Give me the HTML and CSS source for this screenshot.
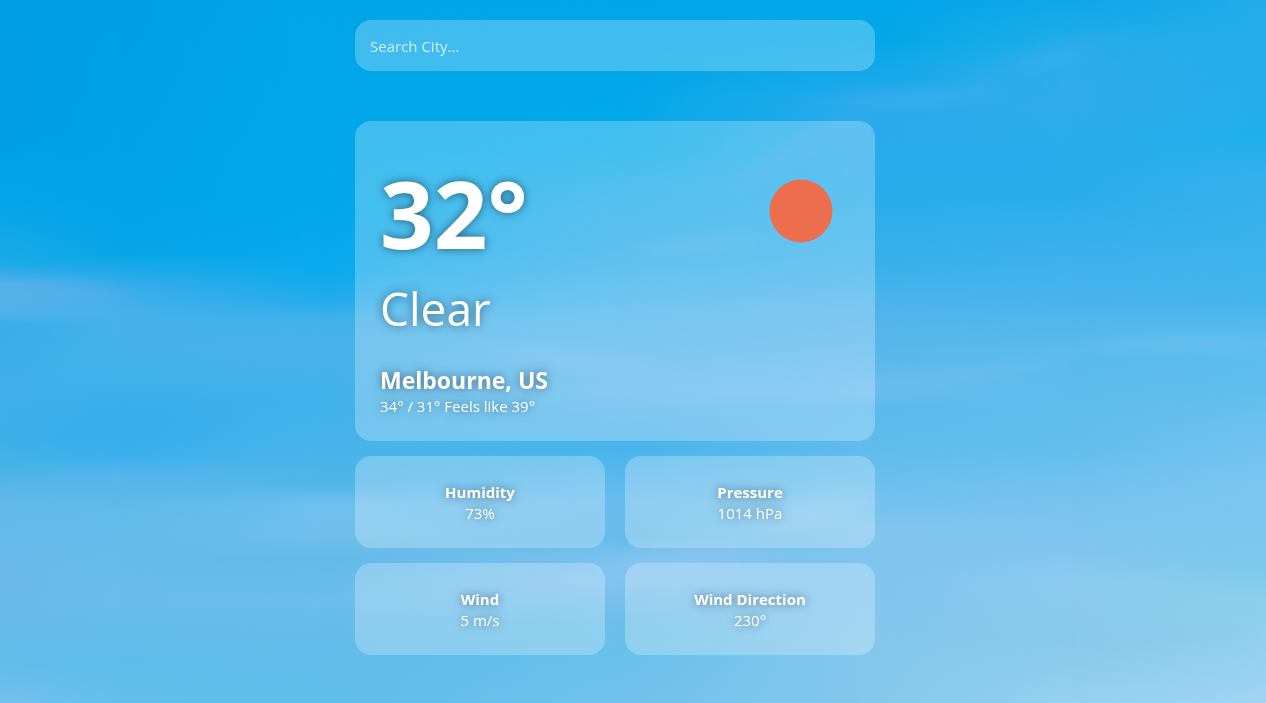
FILE: index.html
```html
<!DOCTYPE html>
<html lang="en">
<head>
<meta charset="utf-8">
<meta name="viewport" content="width=device-width, initial-scale=1">
<title>Weather</title>
<link rel="stylesheet" href="styles.css">
</head>
<body>
<svg class="sky" viewBox="0 0 1266 703" preserveAspectRatio="none" aria-hidden="true"></svg>
<main class="weather">
  <input class="card search" type="search" placeholder="Search City..." aria-label="Search City">
  <section class="card current">
    <div class="summary">
      <h1 class="temperature">32°</h1>
      <p class="condition">Clear</p>
      <h2 class="city">Melbourne, US</h2>
      <p class="range">34° / 31° Feels like 39°</p>
    </div>
    <svg class="sun" viewBox="0 0 64 64" role="img" aria-label="Clear sky"><circle cx="32" cy="32" r="31.5" fill="#ec6e4c"/></svg>
  </section>
  <section class="details">
    <article class="card detail"><h3>Humidity</h3><p>73%</p></article>
    <article class="card detail"><h3>Pressure</h3><p>1014 hPa</p></article>
    <article class="card detail"><h3>Wind</h3><p>5 m/s</p></article>
    <article class="card detail"><h3>Wind Direction</h3><p>230°</p></article>
  </section>
</main>
<script src="sky.js"></script>
</body>
</html>
```
FILE: styles.css
```css
* {
  box-sizing: border-box;
  margin: 0;
}

body {
  min-height: 100vh;
  padding: 20px 36px 20px 0;
  background: #3fb0ea;
  color: #fff;
  font: 15px/21px "Segoe UI", "Open Sans", "Noto Sans", sans-serif;
}

.sky {
  position: fixed;
  inset: 0;
  width: 100%;
  height: 100%;
  z-index: -1;
}

.weather {
  display: flex;
  flex-direction: column;
  width: 100%;
  max-width: 520px;
  margin: 0 auto;
}

.card {
  border: 0;
  border-radius: 16px;
  background: rgba(255, 255, 255, 0.25);
}

.search {
  width: 100%;
  height: 51px;
  margin-bottom: 50px;
  padding: 0 15px;
  color: #fff;
  font: inherit;
  outline: none;
  appearance: none;
}

.search::placeholder {
  color: rgba(255, 255, 255, 0.75);
  opacity: 1;
}

.current {
  display: flex;
  justify-content: space-between;
  align-items: flex-start;
  margin-bottom: 15px;
  padding: 29px 25px 24px;
  text-shadow: 0 0 10px rgba(0, 0, 0, 0.5);
}

.temperature {
  font-size: 94px;
  line-height: 126px;
  text-shadow: 0 0 10px rgba(0, 0, 0, 0.5);
}

.condition {
  margin-bottom: 26px;
  font-size: 46px;
  line-height: 64px;
  text-shadow: 0 0 10px rgba(0, 0, 0, 0.5);
}

.city {
  margin-bottom: 2px;
  font-size: 23px;
  line-height: 28px;
}

.sun {
  width: 64px;
  height: 64px;
  margin: 29px 17px 0 0;
}

.details {
  display: grid;
  grid-template-columns: 1fr 1fr;
  gap: 15px 20px;
}

.detail {
  padding: 26px 15px 24px;
  text-align: center;
  text-shadow: 0 0 10px rgba(0, 0, 0, 0.5);
}

.detail h3 {
  font-size: 15px;
}
```
FILE: sky.js
```js
// Paints the sky: vertical colour ramps at several x positions, cross-faded, with soft cloud streaks on top.
const columns = [
  [0, "0 00a0e6,130 009fe4,200 04a6ea,265 1eaae8,283 50b0ea,310 55b2ea,325 3aaee8,390 42b0ea,440 3fb0e8,465 45b3e6,500 62b8ea,560 6abaec,620 68baea,660 60bcea,703 76c0ee"],
  [120, "0 00a0e6,200 00a3e8,255 08a6e9,290 3cadea,310 45b1ea,370 43b2ea,415 38aeed,455 3cb0ee,475 55b5ea,520 63bbea,600 6bbdec,660 5fbcea,703 64bfec"],
  [320, "0 00a5e8,200 00a8ea,270 0aaaee,300 22abec,320 42b1ea,350 47b2ea,400 40b1ea,450 47b4ea,485 50b6e8,505 6cbfee,535 6fbfec,560 62bae8,600 6cbeec,650 62bbea,703 60bdea"],
  [615, "0 00a5e8,110 00a9ea,150 02abeb,185 16abeb,250 25abeb,310 45b3eb,390 5db8ed,425 50b5ec,450 48b4ec,500 6abcee,540 68bcea,555 78c0ee,580 84c4f0,620 6cbeea,650 68c0ea,703 70c2ec"],
  [870, "0 00a8ea,40 00a8e8,80 18a8ec,100 2aaaec,200 2aaeec,260 38b0ea,310 50b4ec,350 58b8ec,390 6abcf0,410 5abaee,450 60bcec,500 70c2ee,530 80c6ee,560 7ec4ee,640 84c8ee,703 84c8ec"],
  [1070, "0 0ea6ec,30 1cabe8,60 2caeea,100 30adea,160 28aeec,200 2aaeea,250 3cb0ee,300 48b4ec,340 58b8ec,350 5cbbee,360 5abaec,450 64beee,490 74c2ee,550 80c6ee,580 8ccaf0,640 88c8ea,703 96d0f2"],
  [1266, "0 22abea,100 24adec,140 20b0ec,180 34b0ec,300 44b4ea,340 5cbcf0,380 5ebcee,420 6cc0ee,480 78c6f0,570 7ccaec,600 8ccfec,640 92cef0,703 a0d4f4"]
];
const streaks = [
  [50, 293, 70, 12, 0, "68b4ea", 0.3],
  [920, 97, 90, 7, -4, "40b0ec", 0.5],
  [1040, 62, 80, 12, -18, "40b0ec", 0.3],
  [800, 150, 80, 14, -30, "38adec", 0.4],
  [960, 376, 110, 6, -8, "74beee", 0.6],
  [1180, 343, 90, 5, 0, "76c2f0", 0.6],
  [335, 510, 40, 14, 5, "76c2ee", 0.4],
  [690, 560, 80, 14, -4, "8cc6f2", 0.5],
  [815, 512, 55, 16, -12, "8ccaf2", 0.5],
  [700, 245, 70, 8, -5, "50b2ea", 0.4],
  [570, 360, 90, 12, 6, "66b9ec", 0.5],
  [120, 435, 90, 14, 0, "38aeec", 0.4]
];
let defs = '<filter id="soft" x="-50%" y="-150%" width="200%" height="400%" color-interpolation-filters="sRGB"><feGaussianBlur stdDeviation="18 6"/></filter>';
let body = "";
columns.forEach(([x, ramp], i) => {
  const stops = ramp.split(",").map(s => {
    const [y, c] = s.split(" ");
    return `<stop offset="${y / 703}" stop-color="#${c}"/>`;
  }).join("");
  defs += `<linearGradient id="ramp${i}" x1="0" y1="0" x2="0" y2="1">${stops}</linearGradient>`;
  if (i) {
    const from = columns[i - 1][0];
    defs += `<linearGradient id="fade${i}" gradientUnits="userSpaceOnUse" x1="${from}" y1="0" x2="${x}" y2="0"><stop offset="0" stop-color="#000"/><stop offset="1" stop-color="#fff"/></linearGradient>`;
    defs += `<mask id="mask${i}" maskUnits="userSpaceOnUse" x="0" y="0" width="1266" height="703"><rect width="1266" height="703" fill="url(#fade${i})"/></mask>`;
  }
  body += `<rect width="1266" height="703" fill="url(#ramp${i})"${i ? ` mask="url(#mask${i})"` : ""}/>`;
});
streaks.forEach(([x, y, rx, ry, angle, color, alpha]) => {
  body += `<ellipse cx="${x}" cy="${y}" rx="${rx}" ry="${ry}" transform="rotate(${angle} ${x} ${y})" fill="#${color}" opacity="${alpha}" filter="url(#soft)"/>`;
});
document.querySelector(".sky").innerHTML = `<defs>${defs}</defs>${body}`;
```
